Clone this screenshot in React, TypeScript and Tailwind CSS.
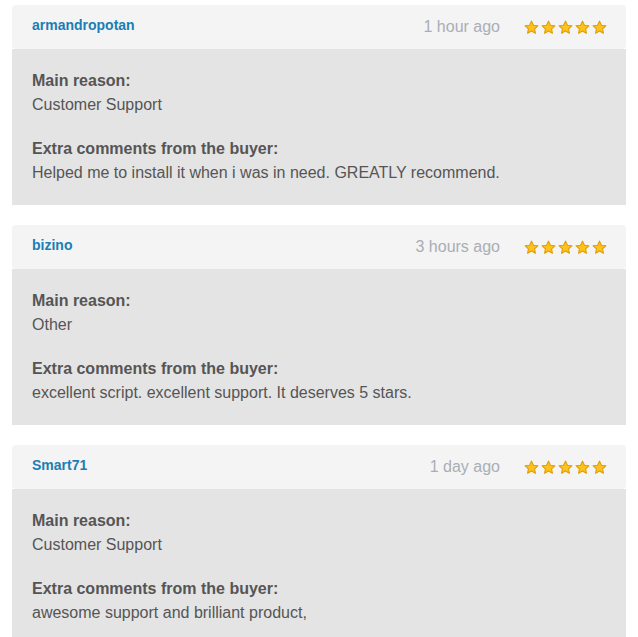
import React from 'react';

const REVIEWS = [
  {
    id: 1,
    user: 'armandropotan',
    time: '1 hour ago',
    reason: 'Customer Support',
    comment: 'Helped me to install it when i was in need. GREATLY recommend.',
  },
  {
    id: 2,
    user: 'bizino',
    time: '3 hours ago',
    reason: 'Other',
    comment: 'excellent script. excellent support. It deserves 5 stars.',
  },
  {
    id: 3,
    user: 'Smart71',
    time: '1 day ago',
    reason: 'Customer Support',
    comment: 'awesome support and brilliant product,',
  },
];

const Star: React.FC = () => (
  <svg width="15" height="15" viewBox="0 0 24 24" className="block">
    <path
      d="M12 1.8l3.1 6.6 7.1.8-5.3 4.9 1.4 7.1L12 17.6l-6.3 3.6 1.4-7.1-5.3-4.9 7.1-.8z"
      fill="#fdc21c"
      stroke="#e29e08"
      strokeWidth="1.8"
      strokeLinejoin="round"
    />
  </svg>
);

export default function App() {
  return (
    <div className="bg-white min-h-screen pt-[5px] px-3 font-['Liberation_Sans',Arial,sans-serif]">
      <div className="flex flex-col gap-5">
        {REVIEWS.map((r) => (
          <div key={r.id}>
            <div className="h-[44px] bg-[#f4f4f4] rounded-[4px] flex items-center pl-5 pr-[19px]">
              <span className="text-[14px] font-bold text-[#1a7eb4] -mt-[3px]">{r.user}</span>
              <span className="ml-auto text-[16px] text-[#a9aeb5]">{r.time}</span>
              <div className="flex gap-[2px] ml-[24px]">
                <Star />
                <Star />
                <Star />
                <Star />
                <Star />
              </div>
            </div>
            <div className="bg-[#e4e4e4] px-5 py-5 text-[16px] leading-6 text-[#555555]">
              <div className="font-bold">Main reason:</div>
              <div>{r.reason}</div>
              <div className="font-bold mt-5">Extra comments from the buyer:</div>
              <div>{r.comment}</div>
            </div>
          </div>
        ))}
      </div>
    </div>
  );
}
